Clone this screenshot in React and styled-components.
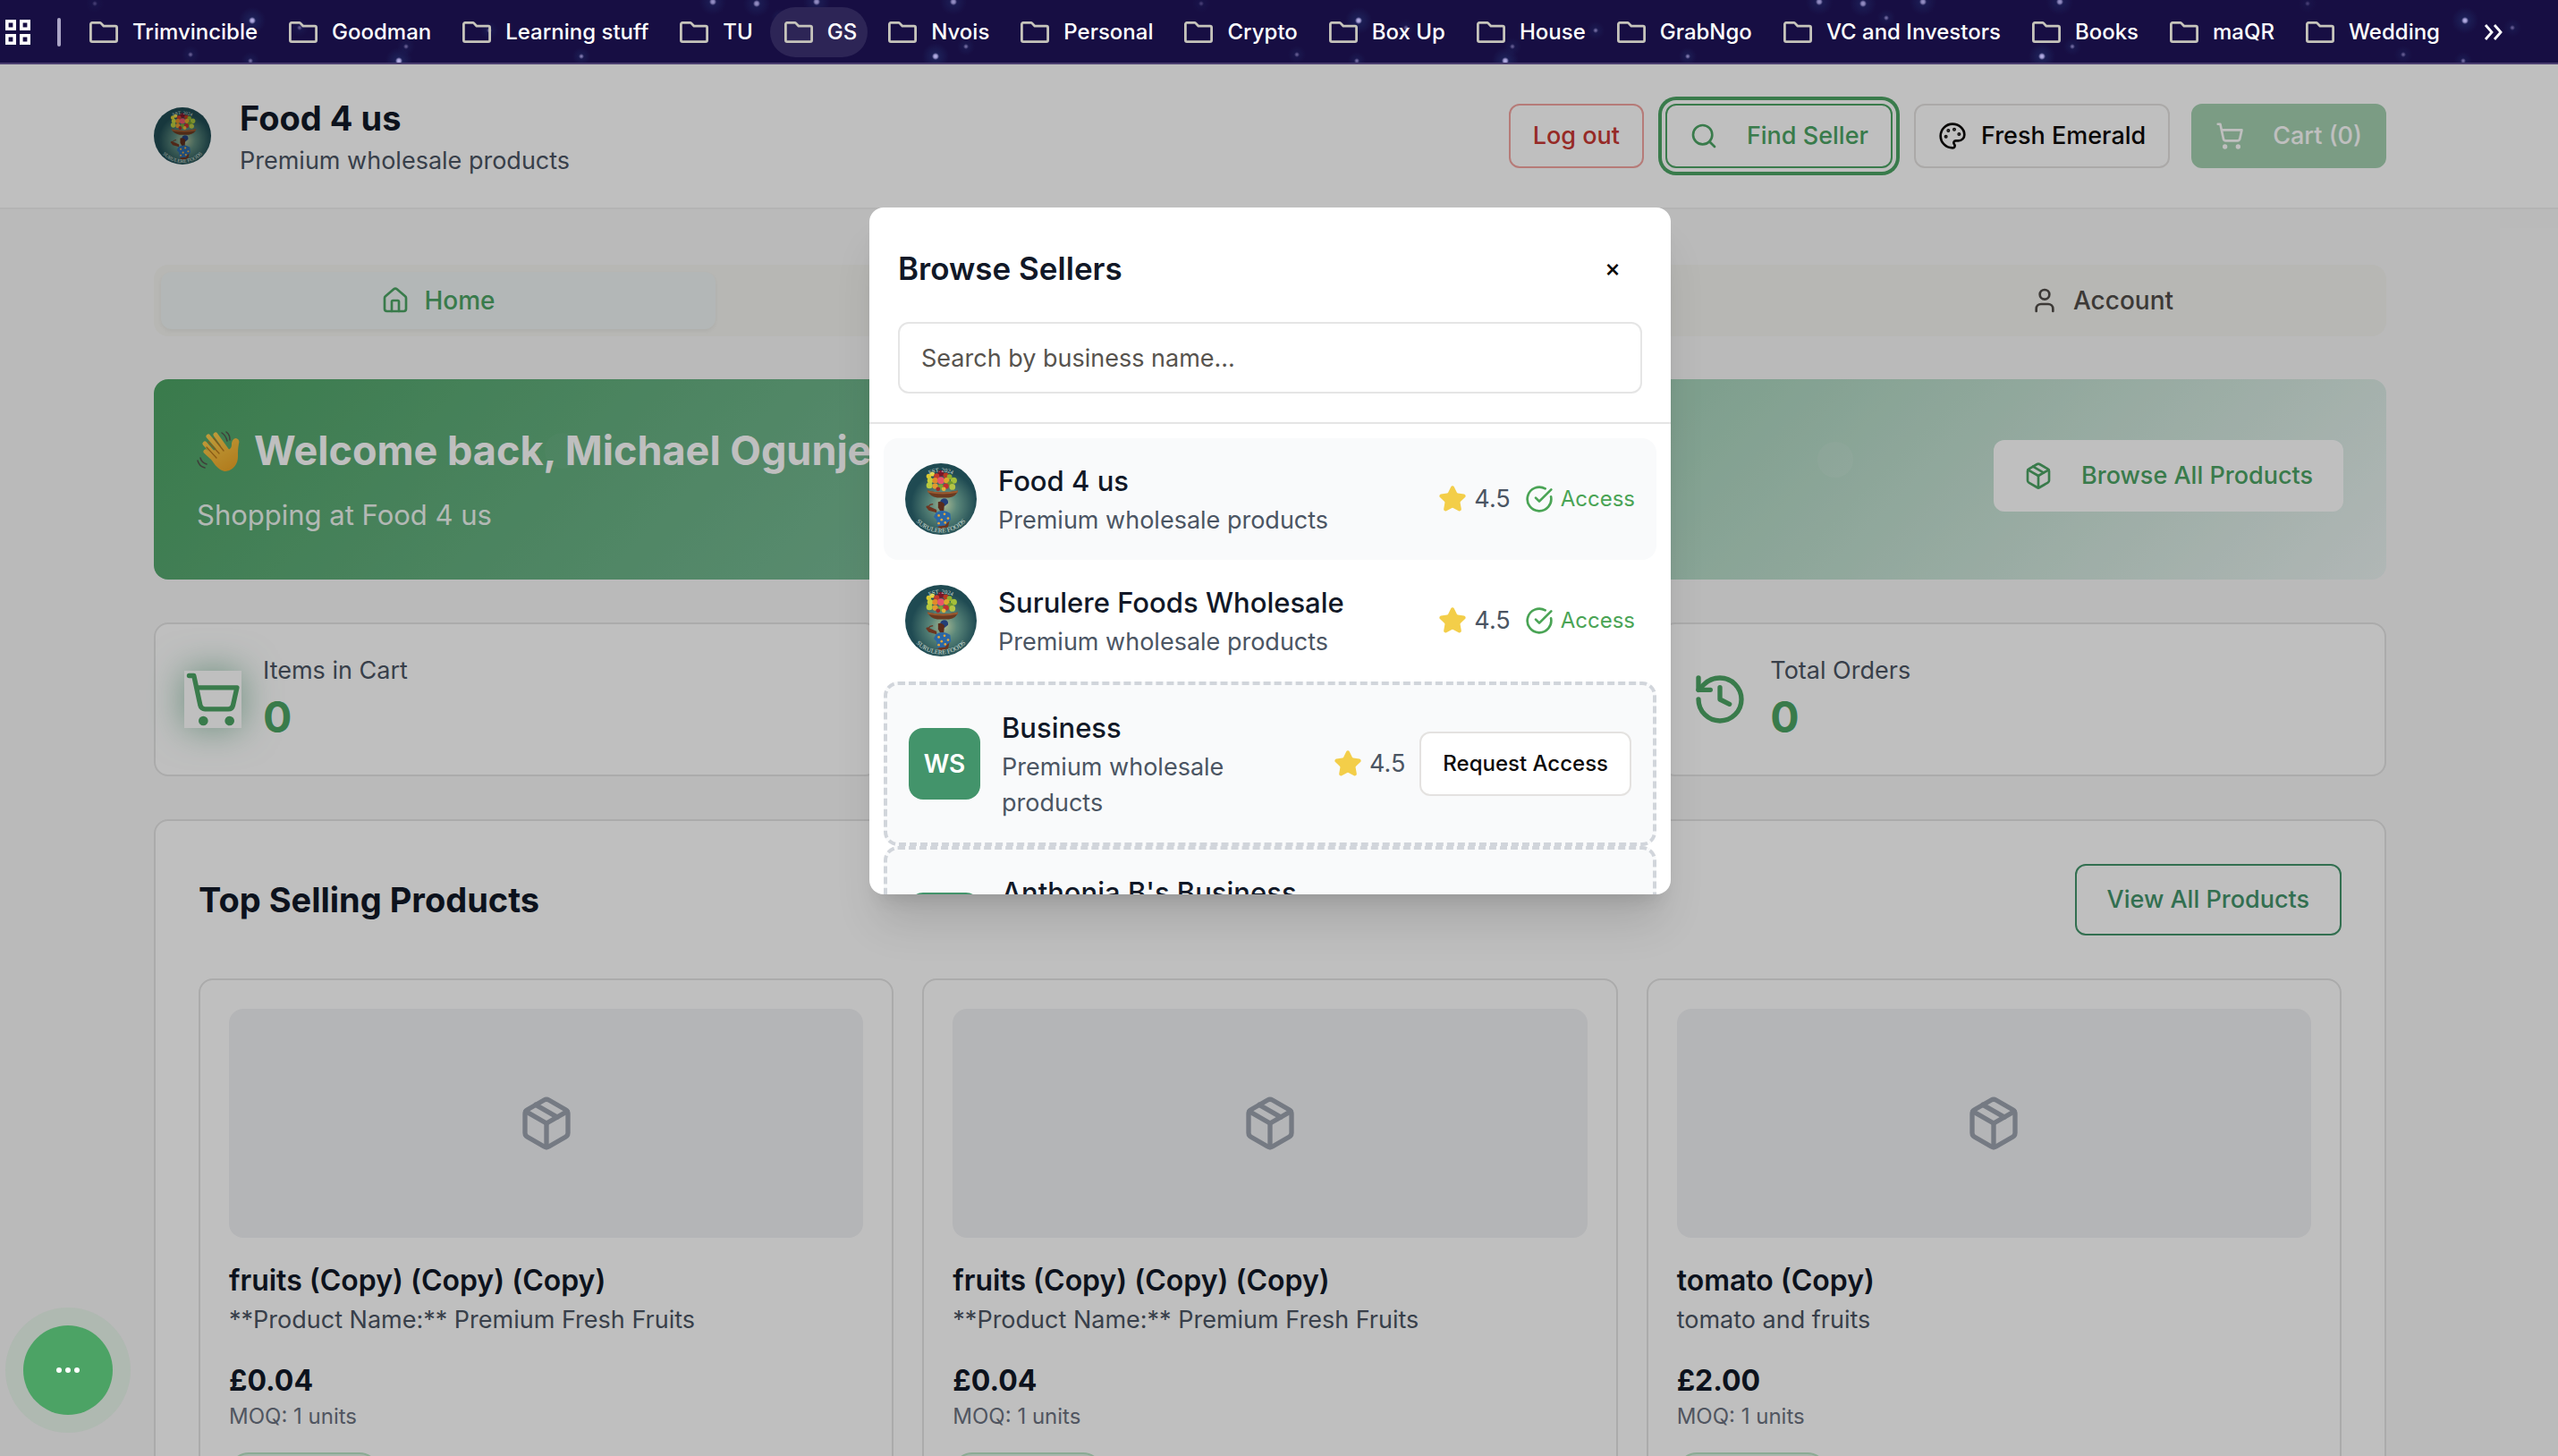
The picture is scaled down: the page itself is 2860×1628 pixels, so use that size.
import React from "react";
import styled, { createGlobalStyle, css } from "styled-components";
import {
  Search,
  Palette,
  ShoppingCart,
  House,
  User,
  Package,
  History,
  Star,
  CircleCheckBig,
} from "lucide-react";

const color = {
  primary: "#4da465",
  accent: "#43946b",
  ink: "#111827",
  muted: "#4b5563",
  faint: "#6b7280",
  line: "#e4e4e4",
};

const GlobalStyle = createGlobalStyle`
  *, *::before, *::after { box-sizing: border-box; }
  body {
    margin: 0;
    font-family: Inter, "Liberation Sans", sans-serif;
    font-size: 27px;
    line-height: 40px;
    color: ${color.ink};
  }
  h1, h2, h3, p, ul { margin: 0; padding: 0; }
  button, input { font: inherit; color: inherit; }
  svg { display: block; flex-shrink: 0; }
`;

/* ---------- Bookmark bar ---------- */

const STARS = [
  [282, 23, 3, 1], [446, 68, 3, 1], [1046, 63, 3, 1], [454, 52, 2, 0.5],
  [280, 68, 2, 0.6], [650, 63, 2, 0.7], [797, 2, 3, 0.8], [846, 4, 3, 0.8],
  [913, 2, 3, 0.8], [1066, 2, 3, 0.8], [872, 20, 2, 0.6], [547, 34, 2, 0.6],
  [106, 4, 2, 0.3], [335, 31, 2, 0.5], [1080, 52, 2, 0.6], [213, 61, 2, 0.5],
];

const starLayers = STARS.map(
  ([x, y, r, a]) =>
    `radial-gradient(circle at ${x}px ${y}px, rgba(190,185,240,${a}) 0, rgba(190,185,240,${a * 0.8}) ${r - 1}px, rgba(40,70,130,${a * 0.3}) ${r + 1}px, transparent ${r * 5}px)`
).join(",");

const Screen = styled.div`
  display: flex;
  flex-direction: column;
  height: 100vh;
  overflow: hidden;
`;

const BookmarkBar = styled.nav`
  flex: none;
  display: flex;
  align-items: center;
  height: 72px;
  padding: 2px 60px 0 6px;
  border-bottom: 2px solid #4b3f70;
  background: ${starLayers}, #170e43;
  background-size: 1237px 72px;
  color: #fff;
`;

const BarDivider = styled.span`
  width: 4px;
  height: 32px;
  margin: 0 16px 0 30px;
  border-radius: 2px;
  background: #aba5c6;
`;

const Bookmarks = styled.div`
  flex: 1;
  display: flex;
  gap: 7px;
`;

const Bookmark = styled.a`
  display: flex;
  align-items: center;
  gap: 16px;
  height: 56px;
  padding: 0 12px 0 16px;
  border-radius: 28px;
  background: ${(p) => (p.$active ? "#2d2556" : "transparent")};
  color: #fff;
  font-size: 24px;
  font-weight: 500;
  line-height: 32px;
  white-space: nowrap;
  text-decoration: none;
`;

const FolderIcon = () => (
  <svg width="32" height="24" viewBox="0 0 32 24" fill="none" stroke="#c6c4bb" strokeWidth="2.8" strokeLinejoin="round" aria-hidden="true">
    <path d="M3 1.4h8.6a1.6 1.6 0 0 1 1.2.5L16 5.2h13a1.6 1.6 0 0 1 1.6 1.6V21a1.6 1.6 0 0 1-1.6 1.6H3A1.6 1.6 0 0 1 1.4 21V3A1.6 1.6 0 0 1 3 1.4Z" />
  </svg>
);

const AppsIcon = () => (
  <svg width="28" height="28" viewBox="0 0 28 28" fill="none" stroke="#fff" strokeWidth="3.6" aria-hidden="true">
    <path d="M1.8 1.8h8.4v8.4H1.8zM17.8 1.8h8.4v8.4h-8.4zM1.8 17.8h8.4v8.4H1.8zM17.8 17.8h8.4v8.4h-8.4z" />
  </svg>
);

const MoreIcon = () => (
  <svg width="24" height="20" viewBox="0 0 24 20" fill="none" stroke="#fff" strokeWidth="2.8" aria-hidden="true">
    <path d="m3 2 7 8-7 8M13 2l7 8-7 8" />
  </svg>
);

const BarButton = styled.button`
  display: flex;
  padding: 0;
  border: 0;
  background: none;
`;

/* ---------- Shop page ---------- */

const Shop = styled.div`
  position: relative;
  flex: 1;
  min-height: 0;
  overflow: hidden;
  background: #f9f9f9;
`;

const Container = styled.div`
  max-width: 2560px;
  margin: 0 auto;
  padding: 0 32px;
`;

const Gutter = styled.div`
  padding-right: 20px;
`;

const Header = styled.header`
  border-bottom: 2px solid #f0f0f0;
  background: #fff;
`;

const HeaderRow = styled(Container)`
  display: flex;
  align-items: center;
  justify-content: space-between;
  padding-top: 32px;
  padding-bottom: 32px;
`;

const Brand = styled.div`
  display: flex;
  align-items: center;
  gap: 32px;
`;

const BrandName = styled.h1`
  font-size: 38px;
  font-weight: 700;
  line-height: 56px;
`;

const Muted = styled.p`
  color: ${color.muted};
`;

const Actions = styled.div`
  display: flex;
  align-items: center;
  gap: 24px;
`;

const Button = styled.button`
  display: inline-flex;
  align-items: center;
  justify-content: center;
  gap: ${(p) => (p.$wide ? 32 : 16)}px;
  height: ${(p) => (p.$large ? 80 : 72)}px;
  padding: 0 ${(p) => (p.$large ? 34 : p.$small ? 24 : 25)}px;
  border: 2px solid #e4e2e0;
  border-radius: 12px;
  background: #fff;
  color: #0c0a09;
  font-size: ${(p) => (p.$small ? 24 : 27)}px;
  font-weight: 500;
  white-space: nowrap;

  ${(p) =>
    p.$tone === "danger" &&
    css`
      border-color: #f3a5a1;
      color: #c93833;
    `}
  ${(p) =>
    p.$tone === "focus" &&
    css`
      border-color: ${color.primary};
      color: ${color.primary};
      box-shadow: 0 0 0 4px #fff, 0 0 0 8px ${color.primary};
    `}
  ${(p) =>
    p.$tone === "solid" &&
    css`
      border-color: ${color.primary};
      background: ${color.primary};
      color: #fff;
      opacity: 0.5;
    `}
  ${(p) =>
    p.$tone === "plain" &&
    css`
      border: 0;
      color: ${color.primary};
      margin-bottom: 8px;
    `}
  ${(p) =>
    p.$tone === "accent" &&
    css`
      border-color: ${color.accent};
      color: ${color.accent};
    `}
`;

const Main = styled(Container)`
  display: flex;
  flex-direction: column;
  gap: 48px;
  padding-top: 62px;
`;

const Tabs = styled.div`
  display: grid;
  grid-template-columns: repeat(4, 1fr);
  padding: 8px;
  border-radius: 16px;
  background: #f4f4f0;
`;

const Tab = styled.button`
  grid-column: ${(p) => p.$slot};
  display: flex;
  align-items: center;
  justify-content: center;
  gap: 16px;
  height: 64px;
  border: 0;
  border-radius: 12px;
  background: ${(p) => (p.$active ? "#eff5f4" : "transparent")};
  box-shadow: ${(p) => (p.$active ? "0 2px 4px rgba(0,0,0,.05)" : "none")};
  color: ${(p) => (p.$active ? color.primary : "#504c49")};
  font-size: 28px;
  font-weight: 500;
`;

const Banner = styled.section`
  position: relative;
  display: flex;
  align-items: center;
  justify-content: space-between;
  padding: 48px;
  border-radius: 16px;
  background: linear-gradient(135deg, #4da465 0%, #79bb97 38%, #a5d3ba 62%, #ecf4f3 100%);
  color: #fff;
`;

const Bubble = styled.span`
  position: absolute;
  left: ${(p) => p.$x};
  top: ${(p) => p.$y};
  width: 40px;
  height: 40px;
  border-radius: 50%;
  background: rgba(255, 255, 255, ${(p) => p.$alpha});
`;

const BannerText = styled.div`
  position: relative;
  display: grid;
  gap: 16px;
`;

const BannerTitle = styled.h2`
  display: flex;
  align-items: center;
  gap: 16px;
  font-size: 45px;
  font-weight: 700;
  line-height: 64px;
  white-space: nowrap;
`;

const BannerSub = styled.p`
  font-size: 31px;
  line-height: 48px;
  opacity: 0.9;
`;

const Stats = styled.div`
  display: grid;
  grid-template-columns: repeat(3, 1fr);
  gap: 32px;
`;

const StatCard = styled.div`
  grid-column: ${(p) => p.$slot};
  display: flex;
  align-items: center;
  gap: 24px;
  padding: 32px;
  border: 2px solid ${color.line};
  border-radius: 16px;
  background: #fff;
`;

const StatIcon = styled.span`
  color: ${color.primary};
  box-shadow: ${(p) => (p.$glow ? "0 0 40px rgba(67,148,107,.6)" : "none")};
`;

const StatValue = styled.p`
  font-size: 48px;
  font-weight: 700;
  line-height: 64px;
  color: ${color.primary};
`;

const Panel = styled.section`
  display: grid;
  gap: 48px;
  padding: 48px;
  border: 2px solid ${color.line};
  border-radius: 16px;
  background: #fff;
`;

const PanelHead = styled.div`
  display: flex;
  align-items: center;
  justify-content: space-between;
`;

const PanelTitle = styled.h2`
  font-size: 38px;
  font-weight: 700;
  line-height: 56px;
`;

const Products = styled.div`
  display: grid;
  grid-template-columns: repeat(3, 1fr);
  gap: 32px;
`;

const ProductCard = styled.article`
  padding: 32px;
  border: 2px solid ${color.line};
  border-radius: 16px;
`;

const Thumb = styled.div`
  display: grid;
  place-items: center;
  height: 256px;
  margin-bottom: 24px;
  border-radius: 16px;
  background: #f1f2f5;
  color: #9ca3af;
`;

const ProductName = styled.h3`
  font-size: 32px;
  font-weight: 600;
  line-height: 48px;
`;

const Price = styled.p`
  margin-top: 24px;
  font-size: 32px;
  font-weight: 700;
  line-height: 48px;
`;

const Moq = styled.p`
  font-size: 24px;
  line-height: 32px;
  color: ${color.faint};
`;

const StockPill = styled.div`
  width: 168px;
  height: 44px;
  margin-top: 24px;
  border: 2px solid #bbe5c6;
  border-radius: 22px;
  background: #e3f3e8;
`;

/* ---------- Seller dialog ---------- */

const Backdrop = styled.div`
  position: absolute;
  inset: 0;
  display: flex;
  justify-content: center;
  align-items: flex-start;
  padding: 160px 20px 0 0;
  background: rgba(0, 0, 0, 0.25);
`;

const Dialog = styled.div`
  display: flex;
  flex-direction: column;
  width: 896px;
  max-height: 768px;
  overflow: hidden;
  border-radius: 16px;
  background: #fff;
  box-shadow: 0 40px 50px -10px rgba(0, 0, 0, 0.12), 0 16px 20px -12px rgba(0, 0, 0, 0.12);
`;

const DialogHead = styled.div`
  display: grid;
  gap: 24px;
  padding: 32px;
  border-bottom: 2px solid #e5e5e5;
`;

const DialogTitleRow = styled.div`
  display: flex;
  align-items: center;
  justify-content: space-between;
`;

const DialogTitle = styled.h2`
  font-size: 35px;
  font-weight: 600;
  line-height: 56px;
`;

const CloseButton = styled.button`
  width: 66px;
  height: 72px;
  padding: 0;
  border: 0;
  border-radius: 12px;
  background: none;
  font-weight: 500;
  color: #0c0a09;
`;

const SearchInput = styled.input`
  width: 100%;
  height: 80px;
  padding: 0 24px;
  border: 2px solid #e5e5e5;
  border-radius: 12px;
  background: #fff;

  &::placeholder {
    color: #57534e;
    opacity: 1;
  }
`;

const SellerList = styled.ul`
  min-height: 0;
  overflow: hidden;
  padding: 16px;
  list-style: none;
`;

const SellerRow = styled.li`
  display: flex;
  align-items: center;
  gap: 24px;
  padding: 24px;
  border-radius: 16px;
  border: ${(p) => (p.$locked ? "4px dashed #d1d5db" : "0")};
  background: ${(p) => (p.$shaded ? "#f9fafb" : "transparent")};
`;

const SellerText = styled.div`
  flex: 1;
  min-width: 0;
`;

const SellerName = styled.h3`
  font-size: 31px;
  font-weight: 500;
  line-height: 48px;
`;

const Initials = styled.span`
  flex: none;
  display: grid;
  place-items: center;
  width: 80px;
  height: 80px;
  border-radius: 16px;
  background: ${color.accent};
  color: #fff;
  font-size: 28px;
  font-weight: 600;
`;

const SellerMeta = styled.div`
  display: flex;
  align-items: center;
  gap: 16px;
`;

const Pair = styled.span`
  display: flex;
  align-items: center;
  gap: 8px;
  color: ${(p) => (p.$granted ? "#4aa455" : color.muted)};
  font-size: ${(p) => (p.$granted ? 24 : 27)}px;
`;

/* ---------- Chat launcher ---------- */

const ChatButton = styled.button`
  position: fixed;
  left: 26px;
  bottom: 46px;
  display: grid;
  place-items: center;
  width: 100px;
  height: 100px;
  padding: 0;
  border: 0;
  border-radius: 50%;
  background: #4ca365;
  box-shadow: 0 0 0 20px rgba(77, 180, 100, 0.1);
`;

/* ---------- Drawings ---------- */

const FRUIT = [
  [33, 18, 3.4, "#d9c832"], [38, 15, 3.2, "#e6d544"], [50, 14, 4.2, "#7c1528"], [44, 18, 3.8, "#c33a2c"],
  [57, 17, 3.8, "#b53a22"], [62, 19, 3.6, "#8fae2e"], [68, 24, 4.4, "#a4bf3a"], [35, 24, 4, "#c5cc3a"],
  [42, 24, 4, "#e08a2a"], [50, 24, 5, "#e8556a"], [58, 24, 4, "#d9a72c"], [63, 29, 4, "#6f9a2c"],
  [34, 31, 4.4, "#b8c93e"], [42, 32, 4, "#e2992f"], [50, 33, 4, "#79a236"], [57, 32, 4, "#c02f31"],
  [66, 33, 4.2, "#b4c545"], [46, 36, 3, "#a12a2b"], [54, 36, 3, "#e4b33b"],
];

const SellerLogo = ({ size, id }) => (
  <svg width={size} height={size} viewBox="0 0 100 100" role="img" aria-label="Surulere Foods logo">
    <defs>
      <radialGradient id={`${id}-bg`} cx="54%" cy="58%" r="46%">
        <stop offset="0" stopColor="#a9ba94" />
        <stop offset="0.4" stopColor="#5b877a" />
        <stop offset="1" stopColor="#1f4a52" />
      </radialGradient>
      <path id={`${id}-top`} d="M12 50a38 38 0 0 1 76 0" />
      <path id={`${id}-bottom`} d="M3 50a47 47 0 0 0 94 0" />
    </defs>
    <circle cx="50" cy="50" r="50" fill={`url(#${id}-bg)`} />
    {FRUIT.map(([x, y, r, fill], i) => (
      <circle key={i} cx={x} cy={y} r={r} fill={fill} />
    ))}
    <path d="M31 38q20 5 43 0-2 8-13 10H45q-11-2-14-10Z" fill="#6b3a20" />
    <path d="M31 38q20 5 43 0l-1 3q-20 4-41 0Z" fill="#9a5a31" />
    <path d="M49 57q-1-7 5-8 7 0 6 7l-5 4Z" fill="#233f78" />
    <path d="M46 54q5-2 9 3l-1 10h-5l-3-5Z" fill="#5b2c1b" />
    <path d="M44 69 33 66l-4-5 2-2 13 6ZM62 80l-2 9-10 3-5-3 9-5Z" fill="#6d3520" />
    <path d="M43 69q10-6 20 1l1 9-5 4-3 4-11 1-1-9-4-4Z" fill="#2b67a5" />
    <path d="m31 62 4-4 4-1" stroke="#6d3520" strokeWidth="1.5" fill="none" />
    {[[47, 73], [55, 71], [60, 77], [51, 79], [47, 84], [56, 83]].map(([x, y]) => (
      <circle key={`${x}-${y}`} cx={x} cy={y} r="1.7" fill="#e5a73a" />
    ))}
    <g fill="#cfdcd2" fontFamily="Liberation Serif, serif" textAnchor="middle">
      <text fontSize="8">
        <textPath href={`#${id}-top`} startOffset="50%">EST. 2024</textPath>
      </text>
      <text fontSize="9">
        <textPath href={`#${id}-bottom`} startOffset="50%">SURULERE FOODS</textPath>
      </text>
    </g>
  </svg>
);

const WavingHand = () => (
  <svg width="48" height="48" viewBox="0 0 48 48" fill="none" strokeLinecap="round" aria-hidden="true">
    <defs>
      <linearGradient id="skin" x1="10" y1="6" x2="34" y2="48" gradientUnits="userSpaceOnUse">
        <stop offset="0" stopColor="#ffd04f" />
        <stop offset="1" stopColor="#eda628" />
      </linearGradient>
    </defs>
    <path d="M10 25 22 36M9 16l16 18M13 8l17 20M21 6l13 18" stroke="url(#skin)" strokeWidth="5" />
    <path d="M13 28 30 16l5 7c3-1 4-3 4-6 0-4 2-7 5-7 3 1 4 3 3 6-1 6-1 9-1 15 0 9-7 16-15 16-8-2-13-10-18-19Z" fill="url(#skin)" />
    <path d="m11 20 11 12M13 14l12 13M19 10l11 14" stroke="#b8791d" strokeWidth="1.3" />
    <path d="M28 4c3 2 5 5 6 9M33 3c3 2 4 5 4 9M4 32c1 4 4 6 7 7M1 35c1 4 4 7 8 8" stroke="#54544e" strokeWidth="1.5" />
  </svg>
);

/* ---------- Data ---------- */

const BOOKMARKS = [
  "Trimvincible", "Goodman", "Learning stuff", "TU", "GS", "Nvois", "Personal", "Crypto",
  "Box Up", "House", "GrabNgo", "VC and Investors", "Books", "maQR", "Wedding",
];

const PRODUCTS = [
  { name: "fruits (Copy) (Copy) (Copy)", text: "**Product Name:** Premium Fresh Fruits", price: "£0.04" },
  { name: "fruits (Copy) (Copy) (Copy)", text: "**Product Name:** Premium Fresh Fruits", price: "£0.04" },
  { name: "tomato (Copy)", text: "tomato and fruits", price: "£2.00" },
];

const SELLERS = [
  { name: "Food 4 us", shaded: true },
  { name: "Surulere Foods Wholesale" },
  { name: "Business", shaded: true, locked: true },
  { name: "Anthonia B's Business", shaded: true, locked: true },
];

const Seller = ({ name, shaded, locked, index }) => (
  <SellerRow $shaded={shaded} $locked={locked}>
    {locked ? <Initials>WS</Initials> : <SellerLogo size={80} id={`seller-${index}`} />}
    <SellerText>
      <SellerName>{name}</SellerName>
      <Muted>Premium wholesale products</Muted>
    </SellerText>
    <SellerMeta>
      <Pair>
        <Star size={32} color="#f3ce49" fill="#f3ce49" />
        4.5
      </Pair>
      {locked ? (
        <Button $small>Request Access</Button>
      ) : (
        <Pair $granted>
          <CircleCheckBig size={32} />
          Access
        </Pair>
      )}
    </SellerMeta>
  </SellerRow>
);

export default function App() {
  return (
    <Screen>
      <GlobalStyle />
      <BookmarkBar aria-label="Bookmarks">
        <BarButton aria-label="Apps"><AppsIcon /></BarButton>
        <BarDivider />
        <Bookmarks>
          {BOOKMARKS.map((name) => (
            <Bookmark key={name} href="#" $active={name === "GS"}>
              <FolderIcon />
              {name}
            </Bookmark>
          ))}
        </Bookmarks>
        <BarButton aria-label="More bookmarks"><MoreIcon /></BarButton>
      </BookmarkBar>

      <Shop>
        <Header>
          <Gutter>
            <HeaderRow>
              <Brand>
                <SellerLogo size={64} id="brand" />
                <div>
                  <BrandName>Food 4 us</BrandName>
                  <Muted>Premium wholesale products</Muted>
                </div>
              </Brand>
              <Actions>
                <Button $tone="danger">Log out</Button>
                <Button $tone="focus" $wide><Search size={32} />Find Seller</Button>
                <Button><Palette size={32} />Fresh Emerald</Button>
                <Button $tone="solid" $wide disabled><ShoppingCart size={32} />Cart (0)</Button>
              </Actions>
            </HeaderRow>
          </Gutter>
        </Header>

        <Gutter>
          <Main as="main">
            <Tabs role="tablist">
              <Tab role="tab" aria-selected="true" $slot={1} $active><House size={32} />Home</Tab>
              <Tab role="tab" aria-selected="false" $slot={4}><User size={32} />Account</Tab>
            </Tabs>

            <Banner>
              <Bubble $x="17.5%" $y="60px" $alpha={0.03} />
              <Bubble $x="74.5%" $y="70px" $alpha={0.08} />
              <BannerText>
                <BannerTitle><WavingHand />Welcome back, Michael Ogunje</BannerTitle>
                <BannerSub>Shopping at Food 4 us</BannerSub>
              </BannerText>
              <Button $tone="plain" $large $wide><Package size={32} />Browse All Products</Button>
            </Banner>

            <Stats>
              <StatCard $slot={1}>
                <StatIcon $glow><ShoppingCart size={64} /></StatIcon>
                <div>
                  <Muted>Items in Cart</Muted>
                  <StatValue>0</StatValue>
                </div>
              </StatCard>
              <StatCard $slot={3}>
                <StatIcon><History size={64} /></StatIcon>
                <div>
                  <Muted>Total Orders</Muted>
                  <StatValue>0</StatValue>
                </div>
              </StatCard>
            </Stats>

            <Panel>
              <PanelHead>
                <PanelTitle>Top Selling Products</PanelTitle>
                <Button $tone="accent" $large>View All Products</Button>
              </PanelHead>
              <Products>
                {PRODUCTS.map((item, i) => (
                  <ProductCard key={i}>
                    <Thumb><Package size={64} /></Thumb>
                    <ProductName>{item.name}</ProductName>
                    <Muted>{item.text}</Muted>
                    <Price>{item.price}</Price>
                    <Moq>MOQ: 1 units</Moq>
                    <StockPill />
                  </ProductCard>
                ))}
              </Products>
            </Panel>
          </Main>
        </Gutter>

        <Backdrop>
          <Dialog role="dialog" aria-modal="true" aria-labelledby="sellers-title">
            <DialogHead>
              <DialogTitleRow>
                <DialogTitle id="sellers-title">Browse Sellers</DialogTitle>
                <CloseButton aria-label="Close">×</CloseButton>
              </DialogTitleRow>
              <SearchInput type="text" placeholder="Search by business name..." aria-label="Search by business name" />
            </DialogHead>
            <SellerList>
              {SELLERS.map((seller, i) => (
                <Seller key={seller.name} index={i} {...seller} />
              ))}
            </SellerList>
          </Dialog>
        </Backdrop>
      </Shop>

      <ChatButton aria-label="Open chat">
        <svg width="28" height="8" viewBox="0 0 28 8" fill="#fff" aria-hidden="true">
          <circle cx="4" cy="4" r="3" />
          <circle cx="14" cy="4" r="3" />
          <circle cx="24" cy="4" r="3" />
        </svg>
      </ChatButton>
    </Screen>
  );
}
